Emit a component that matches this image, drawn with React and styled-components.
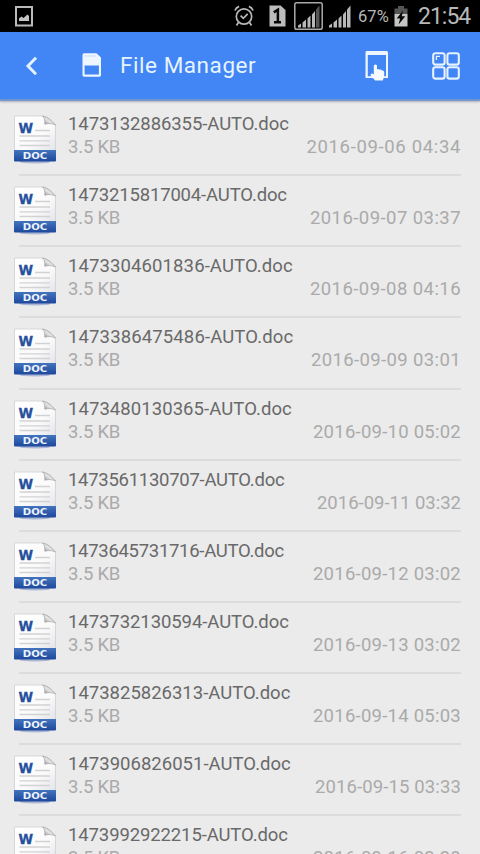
import React from "react";
import styled, { createGlobalStyle } from "styled-components";

const files = [
  { name: "1473132886355-AUTO.doc", date: "2016-09-06 04:34", nameWidth: 222, dateWidth: 154.5 },
  { name: "1473215817004-AUTO.doc", date: "2016-09-07 03:37", nameWidth: 220, dateWidth: 151 },
  { name: "1473304601836-AUTO.doc", date: "2016-09-08 04:16", nameWidth: 226, dateWidth: 151 },
  { name: "1473386475486-AUTO.doc", date: "2016-09-09 03:01", nameWidth: 226.5, dateWidth: 150 },
  { name: "1473480130365-AUTO.doc", date: "2016-09-10 05:02", nameWidth: 225, dateWidth: 148 },
  { name: "1473561130707-AUTO.doc", date: "2016-09-11 03:32", nameWidth: 217.5, dateWidth: 144 },
  { name: "1473645731716-AUTO.doc", date: "2016-09-12 03:02", nameWidth: 217, dateWidth: 148 },
  { name: "1473732130594-AUTO.doc", date: "2016-09-13 03:02", nameWidth: 222, dateWidth: 148 },
  { name: "1473825826313-AUTO.doc", date: "2016-09-14 05:03", nameWidth: 223.5, dateWidth: 148 },
  { name: "1473906826051-AUTO.doc", date: "2016-09-15 03:33", nameWidth: 224, dateWidth: 146 },
  { name: "1473992922215-AUTO.doc", date: "2016-09-16 03:38", nameWidth: 221, dateWidth: 148 },
];

const DocIcon = () => (
  <DocSvg viewBox="0 0 44 50">
    <defs>
      <linearGradient id="paper" x1="0" y1="0" x2="1" y2="1">
        <stop offset="0" stopColor="#ffffff" />
        <stop offset="0.6" stopColor="#fafafb" />
        <stop offset="1" stopColor="#e2e4e8" />
      </linearGradient>
      <linearGradient id="band" x1="0" y1="0" x2="0" y2="1">
        <stop offset="0" stopColor="#4474bd" />
        <stop offset="1" stopColor="#1d479c" />
      </linearGradient>
      <linearGradient id="fold" x1="0" y1="1" x2="1" y2="0">
        <stop offset="0" stopColor="#7d7d7d" />
        <stop offset="0.45" stopColor="#e4e4e4" />
        <stop offset="1" stopColor="#b4b4b4" />
      </linearGradient>
    </defs>
    <ellipse cx="22" cy="46.8" rx="16" ry="1.6" fill="#a9b6d4" />
    <path d="M1.5 1H30C35 2 39 6 42.5 10V36H1.5Z" fill="url(#paper)" stroke="#cfcfd2" strokeWidth="0.8" />
    <path d="M29.5 1C35 2 39 6 42.5 10C38 7.8 34 8.6 31.8 9.3C32 5.5 31.6 3 29.5 1Z" fill="url(#fold)" stroke="#999" strokeWidth="0.6" />
    <path d="M22 15.5H37M6.5 21H37M6.5 25.8H37M6.5 30.5H37" stroke="#d2d2d2" strokeWidth="1.3" />
    <text x="5.6" y="18" fontSize="13.2" textLength="14.6" lengthAdjust="spacingAndGlyphs" fontWeight="bold" fill="#24509c" stroke="#24509c" strokeWidth="0.3" fontFamily="DejaVu Sans, sans-serif">W</text>
    <path d="M1 35H43V45.5Q43 46.5 42 46.5H2Q1 46.5 1 45.5Z" fill="url(#band)" />
    <text x="9.8" y="44" fontSize="8.8" textLength="24.5" lengthAdjust="spacingAndGlyphs" fontWeight="bold" fill="#eef4ff" fontFamily="DejaVu Sans, sans-serif">DOC</text>
  </DocSvg>
);

const PictureIcon = () => (
  <svg width="18" height="21" viewBox="0 0 18 21">
    <rect x="1" y="1" width="16" height="18.5" fill="none" stroke="#bababa" strokeWidth="2" />
    <path d="M4 15V12.5L6.5 10.5L8.5 12L12.5 8.5L14 10V15Z" fill="#c4c4c4" />
  </svg>
);

const AlarmIcon = () => (
  <svg width="20" height="22" viewBox="0 0 20 22" fill="none" stroke="#b8b8b8" strokeWidth="1.7">
    <circle cx="10" cy="11.5" r="7.7" />
    <path d="M0.9 5.5Q2 2.5 5.1 1.4M19.1 5.5Q18 2.5 14.9 1.4M4.6 17.2L2.5 20.5M15.4 17.2L17.5 20.5M6.6 10.6L9.3 13.3L13.7 8.9" />
  </svg>
);

const SimIcon = () => (
  <svg width="17" height="22" viewBox="0 0 17 22">
    <path d="M0.5 0.5H11.5L16.5 5V21.5H0.5Z" fill="#bcbcbc" />
    <path d="M4.8 7.4L8.9 4.8V17M5 17.2H12" fill="none" stroke="#050505" strokeWidth="2.5" />
  </svg>
);

const SignalIcon = ({ boxed }) => (
  <svg width={boxed ? 29 : 22} height="28" viewBox={boxed ? "0 0 29 28" : "4 0 22 28"}>
    {boxed && <rect x="0.8" y="0.8" width="27.4" height="26.4" rx="1.8" fill="none" stroke="#aaa" strokeWidth="1.5" />}
    <path d="M4 25.5V23.5L7 21.5V25.5ZM8.5 25.5V20.5L12 17.5V25.5ZM13.5 25.5V16.5L16.5 13.5V25.5ZM18 25.5V12.5L21 9V25.5Z" fill="#b8b8b8" />
    <path d="M22 25.5V7.5L25.5 3.5V25.5Z" fill={boxed ? "#555" : "#b8b8b8"} />
  </svg>
);

const BatteryIcon = () => (
  <svg width="14" height="21" viewBox="0 0 14 21">
    <path d="M4 0H10V2.5H13.5V8H0.5V2.5H4Z" fill="#555" />
    <path d="M0.5 8H13.5V20.5H0.5Z" fill="#c6c6c6" />
    <path d="M9 4.5L2.7 12.5H6.1L4.6 18.5L11.3 10.3H7.8Z" fill="#080808" />
  </svg>
);

const BackIcon = () => (
  <svg width="14" height="20" viewBox="0 0 14 20">
    <path d="M11 2.8L3 11L11 19.2" fill="none" stroke="#e4f1ff" strokeWidth="3" />
  </svg>
);

const CardIcon = () => (
  <svg width="20" height="24" viewBox="0 0 20 24">
    <path fillRule="evenodd" d="M2 0.3H14.5L19 4.5V22Q19 23.7 17.5 23.7H2Q0.5 23.7 0.5 22V2Q0.5 0.3 2 0.3ZM2.6 12.5V21.6H16.9V12.5Z" fill="#edf6ff" />
    <path d="M3 3H14" stroke="#aecbf5" strokeWidth="1" strokeDasharray="1.5 1" />
  </svg>
);

const TouchIcon = () => (
  <svg width="24" height="30" viewBox="0 0 24 30">
    <path fillRule="evenodd" d="M1.5 0H21.5Q23 0 23 1.5V27H18V25.3H21V4H2.8V25.3H8V27H0.5V1.5Q0.5 0 1.5 0Z" fill="#edf6ff" />
    <path d="M8.8 14.5Q10.5 12.7 12 14.5V18.3Q13.5 17.4 14.6 18.8Q16 18.1 17 19.5Q19 19 19.2 21V25.2L17.8 29.5H10.2L5.6 24.5Q5.4 22.2 7.4 22.5L8.8 23.6Z" fill="#f4faff" />
  </svg>
);

const GridIcon = () => (
  <svg width="28" height="28" viewBox="0 0 28 28" fill="none" stroke="#e6f2ff" strokeWidth="2.1">
    <rect x="1.2" y="1.2" width="11.4" height="11.4" rx="2.2" />
    <rect x="15.4" y="1.2" width="11.4" height="11.4" rx="2.2" />
    <rect x="1.2" y="15.2" width="11.4" height="11.4" rx="2.2" />
    <rect x="15.4" y="15.2" width="11.4" height="11.4" rx="2.2" />
    <path d="M4.4 8V4.4H8" strokeWidth="1.3" />
  </svg>
);

const App = () => {
  return (
    <>
      <GlobalStyle />
      <Screen>
        <StatusBar>
          <PictureIcon />
          <StatusGroup>
            <AlarmIcon />
            <SimIcon />
            <SignalIcon boxed />
            <SignalIcon />
            <Percent>67%</Percent>
            <BatteryIcon />
            <Clock>21:54</Clock>
          </StatusGroup>
        </StatusBar>
        <Header>
          <BackIcon />
          <TitleWrapper>
            <CardIcon />
            <Title>File Manager</Title>
          </TitleWrapper>
          <Actions>
            <TouchIcon />
            <GridIcon />
          </Actions>
        </Header>
        <FileList>
          {files.map((file) => (
            <FileRow key={file.name}>
              <DocIcon />
              <FileInfo>
                <FileName $width={file.nameWidth}>{file.name}</FileName>
                <FileMeta>
                  <FileSize>3.5 KB</FileSize>
                  <FileDate $width={file.dateWidth}>{file.date}</FileDate>
                </FileMeta>
              </FileInfo>
            </FileRow>
          ))}
        </FileList>
      </Screen>
    </>
  );
};

export default App;

const GlobalStyle = createGlobalStyle`
  * {
    box-sizing: border-box;
  }

  body {
    margin: 0;
    overflow: hidden;
    background: #ebebeb;
    font-family: Roboto, "Noto Sans", sans-serif;
  }

  svg {
    display: block;
    flex-shrink: 0;
  }
`;

const Screen = styled.div`
  display: flex;
  flex-direction: column;
  width: 480px;
  height: 854px;
  overflow: hidden;
  background: #ebebeb;
`;

const StatusBar = styled.div`
  display: flex;
  flex-shrink: 0;
  justify-content: space-between;
  align-items: center;
  height: 32px;
  padding: 0 10px 0 15px;
  background: #000;
`;

const StatusGroup = styled.div`
  display: flex;
  align-items: center;

  svg:nth-of-type(1) {
    margin-right: 15px;
  }

  svg:nth-of-type(2) {
    margin-right: 8px;
  }

  svg:nth-of-type(3) {
    margin-right: 6px;
  }
`;

const Percent = styled.span`
  width: 33px;
  margin: 2px 3px 0 7px;
  font-size: 16.5px;
  line-height: 20px;
  letter-spacing: 0.1px;
  color: #b8b8b8;
`;

const Clock = styled.span`
  width: 52px;
  margin: 1px 0 0 10px;
  font-size: 23px;
  line-height: 24px;
  letter-spacing: -1px;
  color: #b8b8b8;
`;

const Header = styled.div`
  display: flex;
  flex-shrink: 0;
  align-items: center;
  height: 69px;
  padding: 0 20px 1px 25px;
  background: #4285f4;
  border-bottom: 2px solid #7595cc;
  box-shadow: 0 1px 2px rgba(90, 100, 130, 0.45);
`;

const TitleWrapper = styled.div`
  display: flex;
  align-items: center;
  margin-left: 43px;
`;

const Title = styled.div`
  margin-left: 18px;
  font-size: 22.5px;
  line-height: 28px;
  letter-spacing: 0.55px;
  white-space: nowrap;
  color: #e6f4ff;
`;

const Actions = styled.div`
  display: flex;
  align-items: center;
  gap: 43px;
  margin-left: auto;
  padding-top: 2px;
`;

const FileList = styled.div`
  padding-top: 3px;
`;

const FileRow = styled.div`
  position: relative;
  display: flex;
  height: 71.15px;
  padding: 11px 19px 0 13px;

  &::after {
    content: "";
    position: absolute;
    right: 19px;
    bottom: -1px;
    left: 19px;
    height: 2px;
    background: #dcdcdc;
  }
`;

const DocSvg = styled.svg`
  width: 44px;
  height: 50px;
`;

const FileInfo = styled.div`
  flex: 1;
  margin-left: 11px;
`;

/* natural run of a name is 223.5px over 22 glyphs, of a date 144px over 16 */
const FileName = styled.div`
  font-size: 18.5px;
  line-height: 23px;
  letter-spacing: ${({ $width }) => ($width - 223.5) / 22}px;
  white-space: nowrap;
  color: #696969;
  margin-top: -2px;
`;

const FileMeta = styled.div`
  display: flex;
  justify-content: space-between;
  font-size: 18.5px;
  line-height: 23px;
  color: #aaa;
`;

const FileSize = styled.span`
  letter-spacing: -0.2px;
`;

const FileDate = styled.span`
  letter-spacing: ${({ $width }) => ($width - 144) / 16}px;
  white-space: nowrap;
`;
